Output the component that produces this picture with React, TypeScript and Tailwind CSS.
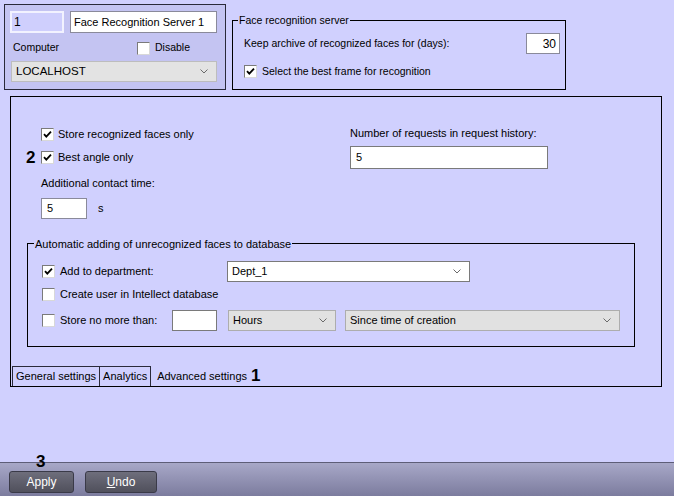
import React from 'react';

const Check = ({ checked = false }: { checked?: boolean }) => (
  <span className="inline-flex h-[13px] w-[13px] shrink-0 items-center justify-center border border-t-[#7a7a7a] border-l-[#7a7a7a] border-r-[#d8d8d8] border-b-[#d8d8d8] bg-white">
    {checked && (
      <svg width="9" height="9" viewBox="0 0 9 9">
        <path d="M1 4.2 L3.3 6.6 L8 1.6" fill="none" stroke="#000" strokeWidth={1.8} />
      </svg>
    )}
  </span>
);

const Chevron = () => (
  <svg width="8" height="5" viewBox="0 0 8 5" className="shrink-0">
    <path d="M0.5 0.5 L4 4 L7.5 0.5" fill="none" stroke="#6a6a6a" strokeWidth={1} />
  </svg>
);

const Combo = ({ value, className }: { value: string; className: string }) => (
  <div className={`flex h-[21px] items-center justify-between border pl-[4px] pr-[8px] ${className}`}>
    <span>{value}</span>
    <Chevron />
  </div>
);

export default function App() {
  return (
    <div className="relative flex h-[496px] w-[674px] flex-col overflow-hidden bg-[#d0d0fe] text-[11px] text-black" style={{ fontFamily: '"Liberation Sans", Arial, sans-serif' }}>
      {/* top row */}
      <div className="flex pl-[4px] pt-[4px] text-[10.5px]">
        <div className="h-[86px] w-[222px] border border-[#2a2a3a] bg-[#c4c4f2] pl-[5px] pt-[6px]">
          <div className="flex gap-[6px]">
            <div className="flex h-[22px] w-[54px] items-center border-2 border-[#f2f2ff] bg-[#cfcffd] pl-[2px] text-[12px]">1</div>
            <div className="flex h-[22px] w-[147px] items-center whitespace-nowrap border border-[#8a8a9a] bg-white pl-[3px] text-[11px]">Face Recognition Server 1</div>
          </div>
          <div className="mt-[8px] flex h-[14px] items-center">
            <span className="ml-[3px] w-[124px]">Computer</span>
            <Check />
            <span className="ml-[5px]">Disable</span>
          </div>
          <Combo value="LOCALHOST" className="ml-[1px] mt-[6px] w-[206px] border-[#bdbdbd] bg-[#e3e3e3] text-[11.5px]" />
        </div>

        <div className="relative ml-[6px] mt-[16px] h-[70px] w-[334px] border border-black pl-[11px]">
          <span className="absolute -top-[8px] left-[5px] bg-[#d0d0fe] px-[1px]">Face recognition server</span>
          <div className="mt-[12px] flex h-[21px] items-center justify-between pr-[5px]">
            <span>Keep archive of recognized faces for (days):</span>
            <div className="flex h-[21px] w-[34px] items-center justify-end border border-[#8a8a9a] bg-white pr-[3px] text-[12px]">30</div>
          </div>
          <div className="mt-[11px] flex h-[13px] items-center">
            <Check checked />
            <span className="ml-[5px]">Select the best frame for recognition</span>
          </div>
        </div>
      </div>

      {/* main panel */}
      <div className="ml-[10px] mt-[6px] flex h-[291px] w-[652px] flex-col border border-black">
        <div className="flex pt-[31px]">
          <div className="ml-[30px] w-[309px]">
            <div className="flex h-[13px] items-center">
              <Check checked />
              <span className="ml-[4px]">Store recognized faces only</span>
            </div>
            <div className="relative mt-[10px] flex h-[13px] items-center">
              <span className="absolute -left-[15px] text-[17px] font-bold">2</span>
              <Check checked />
              <span className="ml-[4px]">Best angle only</span>
            </div>
            <div className="mt-[12px] flex h-[14px] items-center">Additional contact time:</div>
            <div className="mt-[8px] flex items-center">
              <div className="flex h-[21px] w-[46px] items-center border border-[#8a8a9a] bg-white pl-[5px]">5</div>
              <span className="ml-[11px]">s</span>
            </div>
          </div>
          <div>
            <div className="mt-[-2px] flex h-[14px] items-center">Number of requests in request history:</div>
            <div className="mt-[6px] flex h-[23px] w-[198px] items-center border border-[#7a7a7a] bg-white pl-[5px]">5</div>
          </div>
        </div>

        <div className="relative ml-[16px] mt-[24px] h-[104px] w-[608px] border border-black pl-[14px] pt-[17px]">
          <span className="absolute -top-[8px] left-[6px] bg-[#d0d0fe] px-[1px]">Automatic adding of unrecognized faces to database</span>
          <div className="flex h-[21px] items-center">
            <Check checked />
            <span className="ml-[5px] w-[167px]">Add to department:</span>
            <Combo value="Dept_1" className="w-[243px] border-[#7a7a7a] bg-white" />
          </div>
          <div className="mt-[3px] flex h-[18px] items-center">
            <Check />
            <span className="ml-[5px]">Create user in Intellect database</span>
          </div>
          <div className="mt-[7px] flex h-[21px] items-center">
            <Check />
            <span className="ml-[5px] w-[112px]">Store no more than:</span>
            <div className="h-[21px] w-[45px] border border-[#7a7a7a] bg-white" />
            <Combo value="Hours" className="ml-[11px] w-[108px] border-[#adadad] bg-[#e1e1e1]" />
            <Combo value="Since time of creation" className="ml-[9px] w-[275px] border-[#adadad] bg-[#e1e1e1]" />
          </div>
        </div>

        <div className="mt-auto ml-[1px] flex h-[20px] items-stretch">
          <div className="flex items-center border border-b-0 border-[#2a2a3a] px-[3px]">General settings</div>
          <div className="flex items-center border border-b-0 border-l-0 border-[#2a2a3a] px-[3px]">Analytics</div>
          <div className="flex items-center pl-[6px]">
            <span>Advanced settings</span>
            <span className="ml-[4px] text-[17px] font-bold">1</span>
          </div>
        </div>
      </div>

      {/* bottom bar */}
      <div className="relative mt-auto flex h-[34px] items-start gap-[11px] border-t border-[#5e5e78] bg-gradient-to-b from-[#a8a8c8] to-[#7c7c9e] pl-[9px] pt-[8px]">
        <span className="absolute -top-[10px] left-[36px] text-[17px] font-bold leading-none">3</span>
        <button className="flex h-[22px] w-[65px] items-center justify-center rounded-[3px] border border-[#3a3a48] bg-gradient-to-b from-[#6e6e7c] to-[#50505c] text-[12px] text-white">
          Apply
        </button>
        <button className="flex h-[22px] w-[72px] items-center justify-center rounded-[3px] border border-[#3a3a48] bg-gradient-to-b from-[#6e6e7c] to-[#50505c] text-[12px] text-white">
          <span><span className="underline">U</span>ndo</span>
        </button>
      </div>
    </div>
  );
}
